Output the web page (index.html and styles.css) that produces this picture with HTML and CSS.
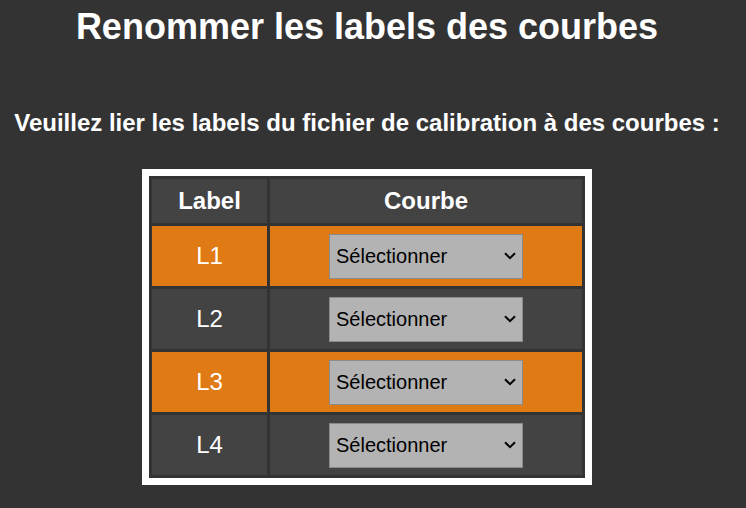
FILE: index.html
```html
<!DOCTYPE html>
<html lang="fr">
<head>
<meta charset="utf-8">
<title>Renommer les labels des courbes</title>
<link rel="stylesheet" href="styles.css">
</head>
<body>
<div class="page">
  <h1 class="title">Renommer les labels des courbes</h1>
  <h2 class="subtitle">Veuillez lier les labels du fichier de calibration à des courbes :</h2>
  <table class="map">
    <thead>
      <tr>
        <th class="col-label">Label</th>
        <th class="col-courbe">Courbe</th>
      </tr>
    </thead>
    <tbody>
      <tr class="row-odd">
        <td>L1</td>
        <td><span class="pick-wrap"><select class="pick"><option>Sélectionner</option></select><svg class="chev" width="12" height="8" viewBox="0 0 12 8"><path d="M1 1.2 L6 6.2 L11 1.2" fill="none" stroke="#000" stroke-width="2"/></svg></span></td>
      </tr>
      <tr class="row-even">
        <td>L2</td>
        <td><span class="pick-wrap"><select class="pick"><option>Sélectionner</option></select><svg class="chev" width="12" height="8" viewBox="0 0 12 8"><path d="M1 1.2 L6 6.2 L11 1.2" fill="none" stroke="#000" stroke-width="2"/></svg></span></td>
      </tr>
      <tr class="row-odd">
        <td>L3</td>
        <td><span class="pick-wrap"><select class="pick"><option>Sélectionner</option></select><svg class="chev" width="12" height="8" viewBox="0 0 12 8"><path d="M1 1.2 L6 6.2 L11 1.2" fill="none" stroke="#000" stroke-width="2"/></svg></span></td>
      </tr>
      <tr class="row-even">
        <td>L4</td>
        <td><span class="pick-wrap"><select class="pick"><option>Sélectionner</option></select><svg class="chev" width="12" height="8" viewBox="0 0 12 8"><path d="M1 1.2 L6 6.2 L11 1.2" fill="none" stroke="#000" stroke-width="2"/></svg></span></td>
      </tr>
    </tbody>
  </table>
</div>
</body>
</html>
```
FILE: styles.css
```css
html, body {
  margin: 0;
  padding: 0;
  background: #333333;
}

body {
  color: #ffffff;
  font-family: "Liberation Sans", Arial, sans-serif;
}

.page {
  width: 734px;
}

.title {
  margin: 6px 0 0;
  font-size: 36px;
  font-weight: bold;
  text-align: center;
  line-height: normal;
}

.subtitle {
  margin: 61px 0 32px;
  font-size: 24px;
  font-weight: bold;
  text-align: center;
  line-height: normal;
}

.map {
  margin: 0 auto;
  border: 7px solid #ffffff;
  border-spacing: 3px;
  background: #333333;
  font-size: 24px;
}

.map th {
  background: #434343;
  font-weight: bold;
  padding: 8px 0;
  text-align: center;
}

.col-label {
  width: 115px;
}

.col-courbe {
  width: 312px;
}

.map td {
  height: 60px;
  padding: 0;
  text-align: center;
  vertical-align: middle;
}

.row-odd td {
  background: #df7a15;
}

.row-even td {
  background: #434343;
}

.pick-wrap {
  position: relative;
  display: block;
  width: 194px;
  height: 45px;
  margin: 0 auto;
}

.pick {
  -webkit-appearance: none;
  appearance: none;
  display: block;
  width: 194px;
  height: 45px;
  box-sizing: border-box;
  padding: 0 0 0 6px;
  margin: 0;
  background-color: #b3b3b3;
  border: 1px solid #8a8a8a;
  border-radius: 0;
  color: #000000;
  font-family: "Liberation Sans", Arial, sans-serif;
  font-size: 20px;
}

.chev {
  position: absolute;
  right: 7px;
  top: 18px;
  pointer-events: none;
}
```
